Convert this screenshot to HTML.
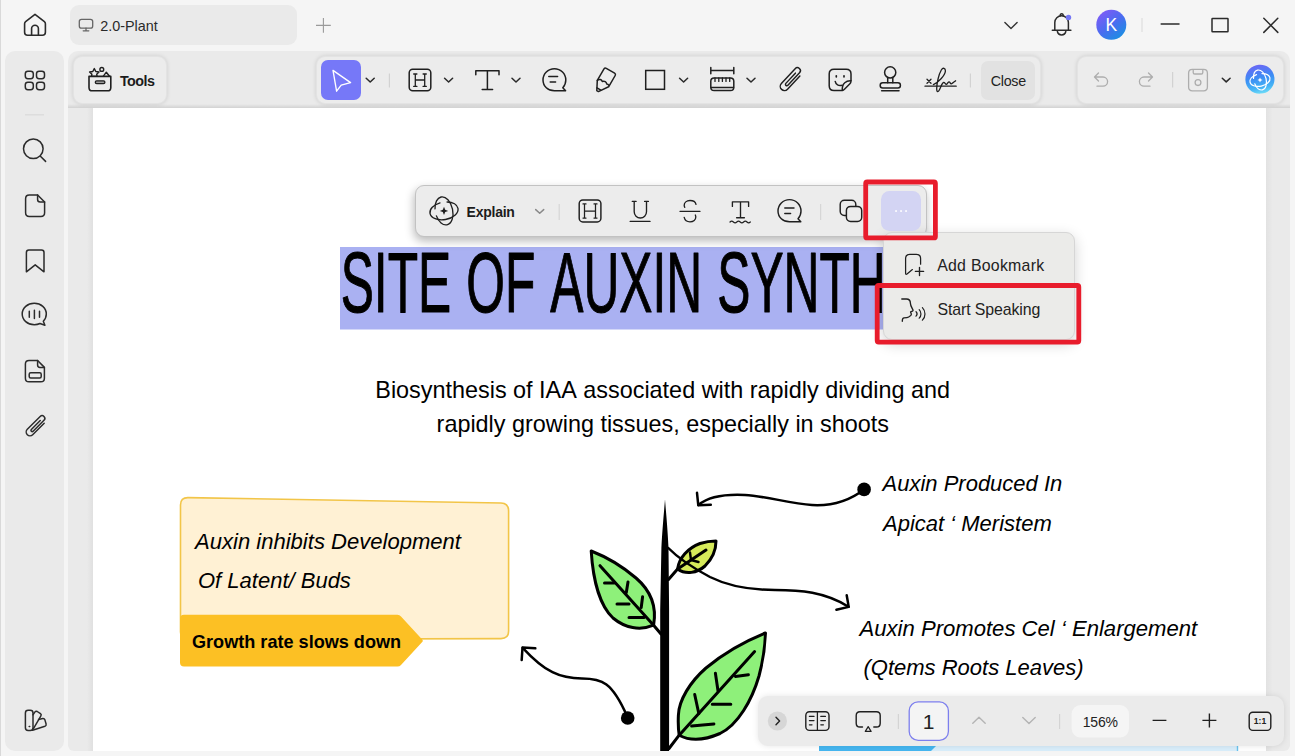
<!DOCTYPE html>
<html lang="en">
<head>
<meta charset="utf-8">
<title>2.0-Plant</title>
<style>
*{box-sizing:border-box;margin:0;padding:0}
html,body{width:1295px;height:756px;overflow:hidden;background:#f5f5f5;font-family:"Liberation Sans",sans-serif;color:#1a1a1a}
.abs{position:absolute}
#app{position:relative;width:1295px;height:756px;overflow:hidden;background:#f5f5f5}
svg{position:absolute;overflow:visible}
.ic{fill:none;stroke-linecap:round;stroke-linejoin:round}
#tab{left:70px;top:4.800px;width:227px;height:39.800px;background:#eaeaea;border-radius:9px}
#tabtxt{left:100px;top:16px;font-size:14.5px;line-height:18px;color:#2a2a2a;letter-spacing:-0.2px}
#side{left:5.200px;top:50.500px;width:59.200px;height:700px;background:#eaeaea;border-radius:10px}
#main{left:68px;top:51px;width:1222px;height:699.500px;background:#eaeaea;border-radius:10px 10px 6px 6px;overflow:hidden}
#page{left:25px;top:57px;width:1173px;height:643px;background:#fff}
.panel{background:#ececec;border:1px solid #e3e3e3;border-radius:9px;box-shadow:0 0 4px rgba(0,0,0,.13)}
#tools{left:72.600px;top:55.800px;width:94.400px;height:48.600px}
#tb{left:316px;top:56px;width:725px;height:48px}
#rp{left:1077px;top:56px;width:207px;height:48px}
#sel{left:321px;top:60px;width:40px;height:40px;background:#7678f8;border-radius:7px}
#closeb{left:981px;top:61px;width:54px;height:39px;background:#e2e2e2;border-radius:7px;font-size:14.5px;line-height:39px;text-align:center;color:#2a2a2a}
.sep{width:1px;background:#d4d4d4}
#ftb{left:415px;top:185px;width:512px;height:52px;background:#ececec;border:1px solid #c2c2c2;border-radius:9px;box-shadow:-1px 4px 10px rgba(0,0,0,.28)}
#more{left:881.400px;top:191.200px;width:40px;height:40px;background:#d3d4f3;border-radius:8.500px}
#menu{left:882.800px;top:231.500px;width:192px;height:108.700px;background:#ebebe9;border:1px solid #d6d6d6;border-radius:9px;box-shadow:0 4px 14px rgba(0,0,0,.18)}
.red{border:4.8px solid #e81c2c;border-radius:3px}
#hl{left:340px;top:247px;width:544px;height:82px;background:#a9adf4}
#bb{left:758px;top:696px;width:526px;height:50px;background:#ebebeb;border-radius:10px;box-shadow:0 0 6px rgba(0,0,0,.10)}
.it{font-style:italic;font-size:22px;line-height:26px;color:#111;white-space:nowrap}
</style>
</head>
<body>
<div id="app">
<!-- title bar -->
<div class="abs" style="left:0;top:0;width:1px;height:756px;background:#d9d9d9"></div>
<div id="tab" class="abs"></div>
<div id="side" class="abs"></div>
<div id="main" class="abs">
  <div class="abs" style="left:0;top:52.500px;width:1222px;height:4.500px;background:linear-gradient(180deg,rgba(0,0,0,0),rgba(0,0,0,.10))"></div>
  <div class="abs" style="left:19px;top:57px;width:6px;height:643px;background:linear-gradient(90deg,rgba(0,0,0,0),rgba(0,0,0,.045))"></div>
  <div id="page" class="abs"></div>
  <div class="abs" style="left:1198px;top:57px;width:6px;height:643px;background:linear-gradient(90deg,#e2e2e2,#e9e9e9)"></div>
</div>
<div id="tools" class="abs panel"></div>
<div id="tb" class="abs panel"></div>
<div id="rp" class="abs panel"></div>
<div id="sel" class="abs"></div>
<div id="closeb" class="abs"></div>
<!-- PAGE CONTENT -->
<svg id="pg" width="1295" height="756" viewBox="0 0 1295 756" style="left:0;top:0">
<defs><clipPath id="pc"><rect x="93" y="108" width="1173" height="643"/></clipPath></defs>
<g clip-path="url(#pc)" font-family="Liberation Sans, sans-serif" style="font-kerning:none">
<rect x="340" y="247" width="660" height="82.5" fill="#aab1f2"/>
<text style="font-kerning:none" word-spacing="2.100" transform="translate(340.700 311.900) scale(0.5835 1)" font-size="85.200" fill="#000" stroke="#000" stroke-width="0.900" stroke-linejoin="round" vector-effect="non-scaling-stroke">SITE OF AUXIN SYNTH</text>
<text x="375.3" y="398.4" font-size="23.4" fill="#000">Biosynthesis of IAA associated with rapidly dividing and</text>
<text x="436.6" y="432.3" font-size="23.4" fill="#000">rapidly growing tissues, especially in shoots</text>
<!-- yellow note -->
<path d="M180.5 505 Q180.5 497.5 188 497.6 L501 503 Q508.6 503.2 508.6 511 L508.6 631 Q508.6 638.6 501 638.6 L188 639.5 Q180.5 639.5 180.5 632 Z" fill="#fff1d4" stroke="#f2c548" stroke-width="1.600"/>
<path d="M184 614.800 L397.500 614.800 Q399.600 614.800 401 616.400 L422.200 639.400 Q423.400 640.700 422.200 642 L401 665 Q399.600 666.500 397.500 666.500 L184 666.500 Q180 666.500 180 662.500 L180 618.800 Q180 614.800 184 614.800 Z" fill="#fcc024"/>
<text x="195" y="549" font-size="22.050" font-style="italic" fill="#000">Auxin inhibits Development</text>
<text x="198" y="588.4" font-size="22" font-style="italic" fill="#000">Of Latent/ Buds</text>
<text x="192" y="648.3" font-size="18.1" font-weight="bold" fill="#000">Growth rate slows down</text>
<text x="882.5" y="491.3" font-size="22" font-style="italic" fill="#000">Auxin Produced In</text>
<text x="883" y="530.6" font-size="22" font-style="italic" fill="#000">Apicat ‘ Meristem</text>
<text x="859.5" y="635.9" font-size="22.1" font-style="italic" fill="#000">Auxin Promotes Cel ‘ Enlargement</text>
<text x="863.5" y="674.5" font-size="22" font-style="italic" fill="#000">(Qtems Roots Leaves)</text>
<!-- plant -->
<g fill="none" stroke="#000" stroke-width="3" stroke-linecap="round" stroke-linejoin="round">
<path d="M665 499.300 C664.200 510 662.400 528 661.400 548 L660.200 610 L660.200 751 L669.100 751 L669.100 610 L668.500 548 C667.600 528 665.800 510 665 499.300 Z" fill="#000" stroke="none"/>
<!-- left leaf -->
<path d="M591.2 551 C604 556 622 566 636 578 C650 590 657 606 653.6 625.2 C640 631 625 628 613 618 C600 606 593 580 591.2 551 Z" fill="#8ef07a"/>
<path d="M600 565.7 L653.6 625.2 L661 634"/>
<path d="M604.5 583 L614 583 M617 604 L629 604 M629 617.5 L644 617.5 M628 582 L626.3 592.5 M642.6 596.7 L641.2 607.6"/>
<!-- small leaf -->
<path d="M677.6 569 C679 558 688 548 700 543.5 C706 541.6 712 541 716 541 C716 548 713 558 705 566 C697 573 686 575 677.6 569 Z" fill="#d6ea5a"/>
<path d="M668.5 579.5 L677.6 569 L706 550"/>
<path d="M691 560 L690 552.5 M691 560 L698.5 562" stroke-width="2.4"/>
<!-- big leaf -->
<path d="M765.5 633 C748 640 724 653 706 668 C690 682 679 700 678.4 715 C678 723 678.4 730 679.2 735.2 C690 741 705 740 720 733.5 C738 725 752 700 759 676 C763 661 765 647 765.5 633 Z" fill="#8ef07a"/>
<path d="M754.6 651.6 L679.2 735.2 L669 748.5"/>
<path d="M735.4 676.4 L748.4 674.7 M712.3 704.3 L730.8 704.3 M691.6 726 L713.9 723.9 M715.4 673.3 L718 690.8 M694.7 694.5 L698.8 713.5"/>
</g>
<g fill="none" stroke="#000" stroke-width="2.5" stroke-linecap="round" stroke-linejoin="round">
<path d="M864 489.5 C848 502 830 506 812 505 C790 503.500 765 496 745 495 C725 494 708 497 698.500 505"/>
<path d="M697 492.800 L698.300 505.300 L710.800 504.700"/>
<path d="M668.300 548 C680 560 695 569 710 577 C730 587 750 590 775 590 C800 590 825 592 848.500 606.800"/>
<path d="M846.700 595.300 L848.700 606.900 L836.400 609.800"/>
<path d="M627 716 C612 682 602 678.500 582 678.500 C560 678.500 545 672 522.700 647.800"/>
<path d="M535.300 648.300 L522.500 647.500 L521.700 660"/>
</g>
<circle cx="864.1" cy="489.4" r="6.8" fill="#000"/>
<circle cx="627.7" cy="718" r="6.8" fill="#000"/>
<rect x="819" y="746" width="419" height="5" fill="#d9eefb"/>
<path d="M819 746 L936 746 L931 751 L819 751 Z" fill="#45b6f0"/>
<rect x="1236.800" y="746" width="1.400" height="5" fill="#6cc4ee"/>
</g>
</svg>
<!-- floating toolbar -->
<div id="ftb" class="abs"></div>
<div id="menu" class="abs"></div>
<div id="more" class="abs"></div>
<div id="bb" class="abs"></div>
<svg id="ui1" width="1295" height="756" viewBox="0 0 1295 756" style="left:0;top:0" font-family="Liberation Sans, sans-serif">
<!-- TITLEBAR -->
<text x="100.200" y="30.600" font-size="14.400" fill="#2a2a2a">2.0-Plant</text>
<g class="ic" stroke="#2b2b2b" stroke-width="1.6">
<path d="M35 14.300 L25.600 21.600 Q24.600 22.400 24.600 23.700 L24.600 32.300 Q24.600 35.300 27.600 35.300 L42.400 35.300 Q45.400 35.300 45.400 32.300 L45.400 23.700 Q45.400 22.400 44.400 21.600 Z"/>
<path d="M31.600 35.300 V28.600 a3.400 3.400 0 0 1 6.800 0 V35.300"/>
</g>
<g class="ic" stroke="#666" stroke-width="1.3">
<rect x="79.300" y="19.300" width="13.400" height="8.800" rx="2.200"/>
<path d="M86 28.100 V30.600 M83.200 30.800 H88.800"/>
</g>
<path d="M316 25.400 H330.800 M323.400 18 V32.800" stroke="#9a9a9a" stroke-width="1.100" fill="none"/>
<path class="ic" d="M1004.900 22.600 L1011 28.600 L1017.100 22.600" stroke="#333" stroke-width="1.400"/>
<g class="ic" stroke="#2b2b2b" stroke-width="1.500">
<path d="M1054.800 30.200 V22.600 a6.800 6.800 0 0 1 13.600 0 V30.200"/>
<path d="M1052.300 30.300 H1070.900"/>
<path d="M1057.400 31.500 a4.300 4.300 0 0 0 8.400 0"/>
<path d="M1060.200 15.700 a1.500 1.900 0 0 1 3 0"/>
</g>
<circle cx="1068.500" cy="17.500" r="2.700" fill="#7577f5"/>
<defs>
<linearGradient id="av" x1="0.150" y1="0.100" x2="0.800" y2="0.950"><stop offset="0" stop-color="#7c5cf6"/><stop offset="0.500" stop-color="#4a6cf0"/><stop offset="1" stop-color="#1b8fe2"/></linearGradient>
</defs>
<circle cx="1111.300" cy="24.800" r="15" fill="url(#av)"/>
<text x="1111.300" y="31" font-size="17.500" fill="#fff" text-anchor="middle">K</text>
<path d="M1142 18 V32" stroke="#dedede" stroke-width="1.200"/>
<g class="ic" stroke="#2b2b2b" stroke-width="1.500" stroke-linecap="butt">
<path d="M1161.200 24.100 H1179"/>
<rect x="1212" y="18.500" width="16" height="13.300" rx="0.500"/>
<path d="M1263.800 18.300 L1277.800 32.400 M1277.800 18.300 L1263.800 32.400"/>
</g>
<!-- SIDEBAR -->
<g class="ic" stroke="#2b2b2b" stroke-width="1.500">
<rect x="25.300" y="71.200" width="8" height="7.500" rx="2.600"/>
<rect x="36.500" y="71.200" width="8" height="7.500" rx="2.600"/>
<rect x="25.300" y="82.200" width="8" height="7.500" rx="2.600"/>
<rect x="36.500" y="82.200" width="8" height="7.500" rx="2.600"/>
<circle cx="33.300" cy="148.800" r="9.800"/>
<path d="M40.400 156.200 L45.600 161.400"/>
<path d="M37.600 195 H29.300 Q25.600 195 25.600 198.700 V212.800 Q25.600 216.500 29.300 216.500 H40.900 Q44.600 216.500 44.600 212.800 V202 Z"/>
<path d="M37.600 195 V199.500 Q37.600 202 40.100 202 H44.600"/>
<path d="M26.400 252.500 Q26.400 250 28.900 250 H41.500 Q44 250 44 252.500 V271.800 L35.200 264.800 L26.400 271.800 Z"/>
<path d="M34.300 303.300 C41 303.300 46.300 308 46.300 314 C46.300 316.800 45.200 319.300 43.300 321.200 L44.900 325.200 L40 323.500 C38.300 324.300 36.400 324.700 34.300 324.700 C27.500 324.700 22.200 320 22.200 314 C22.200 308 27.500 303.300 34.300 303.300 Z"/>
<path d="M29.300 311.200 V317.200 M34.400 310.300 V318.400 M39.500 311.200 V317.200"/>
<path d="M37.600 360.500 H29 Q25.400 360.500 25.400 364.100 V378.200 Q25.400 381.800 29 381.800 H40.800 Q44.400 381.800 44.400 378.200 V367.400 Z"/>
<path d="M37.600 360.500 V365 Q37.600 367.400 40 367.400 H44.400"/>
<rect x="29.200" y="372.700" width="12" height="5.200" rx="1.500"/>
<path transform="translate(36.100 425.900) rotate(-45) scale(0.900)" stroke-width="1.650" d="M8.500 4.200 L-9.600 4.200 A4.200 4.200 0 0 1 -9.600 -4.200 L10.600 -4.200 A3 3 0 0 1 10.600 1.800 L-6.500 1.800 A1.400 1.400 0 0 1 -6.500 -1 L7.500 -1"/>
<rect x="25.400" y="710.300" width="7.600" height="20.200" rx="2.700"/>
<path d="M33 714.800 L35 711.900 Q35.900 710.700 37.200 711.500 L40.500 713.700 Q41.700 714.600 40.900 715.900 L33.300 728.800"/>
<path d="M38.600 719.600 L42.800 718.600 Q44.300 718.400 44.900 719.900 L46.100 724 Q46.500 725.700 44.900 726.300 L32.600 730.300"/>
<circle cx="29.300" cy="726.500" r="0.500" fill="#2b2b2b" stroke-width="0.800"/>
</g>
<path d="M25 114.800 H44" stroke="#dadada" stroke-width="1.200"/>
</svg>
<svg id="ui2" width="1295" height="756" viewBox="0 0 1295 756" style="left:0;top:0" font-family="Liberation Sans, sans-serif">
<!-- TOOLS BUTTON -->
<g class="ic" stroke="#1f1f1f" stroke-width="1.600">
<path d="M89 76.400 H110.800 V87.400 Q110.800 90.800 107.400 90.800 H92.400 Q89 90.800 89 87.400 Z"/>
<rect x="95.300" y="80.800" width="9.600" height="2.800" rx="1.400" fill="#9a9a9a" stroke-width="1.300"/>
<path d="M94.300 68.600 L95.800 71.500 L99 72 L96.700 74.200 L97.100 76.400 H91.500 L91.900 74.200 L89.600 72 L92.800 71.500 Z" stroke-width="1.400"/>
<circle cx="101.800" cy="69.400" r="1.900" stroke-width="1.400"/>
<path d="M103.200 76.300 L106.300 72.200 L109.500 76.300" stroke-width="1.400"/>
</g>
<text x="120" y="85.700" font-size="14.300" font-weight="bold" fill="#1c1c1c" letter-spacing="-0.550">Tools</text>
<!-- MAIN TOOLBAR -->
<path class="ic" d="M333 70.400 L350.600 82.600 L341.200 85.200 L336.600 91.200 Z" stroke="#fff" stroke-width="1.350"/>
<g class="ic" stroke="#2b2b2b" stroke-width="1.550">
<path d="M366.200 78.300 L370.200 82 L374.200 78.300"/>
<path d="M444.600 78.300 L448.600 82 L452.600 78.300"/>
<path d="M512 78.300 L516 82 L520 78.300"/>
<path d="M679.600 78.300 L683.600 82 L687.600 78.300"/>
<path d="M747 78.300 L751 82 L755 78.300"/>
<path d="M1222.300 78.200 L1226.200 81.900 L1230.100 78.200"/>
</g>
<path d="M389.400 73.500 V87.500 M970.400 73.500 V87.500 M1172.600 72 V87.500" stroke="#d2d2d2" stroke-width="1.200" fill="none"/>
<g class="ic" stroke="#1f1f1f" stroke-width="1.500">
<!-- H box -->
<rect x="409.200" y="69.200" width="21.600" height="21.600" rx="3.500"/>
<path d="M415.300 74 V86.400 M424.700 74 V86.400 M415.300 80 H424.700 M413.700 74 H416.900 M423.100 74 H426.300 M413.700 86.400 H416.900 M423.100 86.400 H426.300" stroke-width="1.300"/>
<!-- T -->
<path d="M475.800 74.800 V70.800 H499 V74.800 M487.400 70.800 V89.400 M482.200 89.400 H492.600"/>
<!-- comment -->
<path d="M554.400 68.700 C560.800 68.700 565.800 73.700 565.800 80 C565.800 83 564.700 85.700 562.800 87.700 L565.600 90.800 H554.400 C548 90.800 543 86.200 543 80 C543 73.700 548 68.700 554.400 68.700 Z"/>
<path d="M548.800 76.600 H557.600 M550.200 82 H555.600"/>
<!-- highlighter -->
<path d="M606.300 68.400 L614.600 73.200 Q616 74.100 615.200 75.500 L608.600 86.800 L598.400 91.600 L596.800 90.700 L597.300 80.300 L604 68.900 Q604.900 67.600 606.300 68.400 Z"/>
<path d="M597.300 80.300 C599.500 78.800 601.500 79.500 602.300 81.500 C604.500 80.600 606.500 81.800 606.700 84 C607.600 84 608.400 84.500 608.900 85.400"/>
<path d="M597 87.800 L600.800 90.200"/>
<!-- rect -->
<rect x="645.700" y="70.500" width="18.800" height="18.800" stroke-linejoin="miter"/>
<!-- measure -->
<path d="M710.800 67.400 V73.800 M733.800 67.400 V73.800 M710.800 70.600 H733.800"/>
<rect x="710.800" y="78" width="23" height="12.600" rx="3.300"/>
<path d="M715 78 V81.400 M718.800 78 V81.400 M722.400 78 V81.400 M726 78 V81.400 M729.700 78 V81.400 M711 87.500 H733.600" stroke-width="1.300"/>
<!-- paperclip -->
<path transform="translate(791 79.300) rotate(-47)" stroke-width="1.450" d="M8.500 4.200 L-9.600 4.200 A4.200 4.200 0 0 1 -9.600 -4.200 L10.600 -4.200 A3 3 0 0 1 10.600 1.800 L-6.500 1.800 A1.400 1.400 0 0 1 -6.500 -1 L7.500 -1"/>
<!-- sticker -->
<path d="M851 80.500 V74 Q851 69.200 846.200 69.200 H834 Q829.200 69.200 829.200 74 V85.800 Q829.200 90.600 834 90.600 H841.500 C842.500 90.600 843.500 90.200 844.200 89.500 L849.900 83.800 C850.600 83.100 851 82 851 80.500 Z"/>
<path d="M851 80.800 C846.500 80.500 841.800 83 842.300 90.400"/>
<path d="M836.300 75.800 V76.800 M844 75.800 V76.800" stroke-width="1.700"/>
<path d="M835.200 81.400 C835.800 84.600 838.600 86.200 842.200 85.200"/>
<!-- stamp -->
<circle cx="890.200" cy="72.400" r="5.600"/>
<path d="M887.700 77.600 V82.800 M892.800 77.600 V82.800"/>
<rect x="880.200" y="82.800" width="20.200" height="5.200" rx="2.500"/>
<path d="M881.600 90.700 H899"/>
<!-- signature -->
<path d="M927 79.200 L931 83.200 M931 79.200 L927 83.200" stroke-width="1.300"/>
<path d="M925 86.200 H956.200" stroke-width="1.300"/>
<path d="M933.400 84.600 C938 82.500 945.200 75.500 945.400 71 C945.500 68 943 67.200 941.300 70 C938.800 74.200 936.800 83 936.700 88.500 C936.700 92.500 938.300 92.400 939.600 89.500 C940.800 86.800 941.800 83.600 943.300 82.600 C944.800 81.700 945.200 84.600 946.400 84.300 C947.700 84 948 81.600 949.200 81.800 C950.300 82 950.100 84 951.300 83.800 C952.600 83.500 953.800 81.600 955.600 80.800" stroke-width="1.300"/>
</g>
<text x="1008.300" y="85.600" font-size="14.300" fill="#222" text-anchor="middle" letter-spacing="-0.300">Close</text>
<!-- RIGHT PANEL -->
<g class="ic" stroke="#adadad" stroke-width="1.300">
<path d="M1098.500 73 L1094.500 77 L1098.500 81 M1094.800 77 H1103 a4.600 4.600 0 0 1 0 9.200 H1097"/>
<path d="M1148.500 73 L1152.500 77 L1148.500 81 M1152.200 77 H1144 a4.600 4.600 0 0 0 0 9.200 H1150"/>
<path d="M1192.400 69.400 H1203.600 Q1207.400 69.400 1207.400 73.200 V87 Q1207.400 90.800 1203.600 90.800 H1192.400 Q1188.600 90.800 1188.600 87 V73.200 Q1188.600 69.400 1192.400 69.400 Z"/>
<path d="M1193.200 69.600 V72.400 Q1193.200 74 1194.800 74 H1201.200 Q1202.800 74 1202.800 72.400 V69.600"/>
<circle cx="1198" cy="82.600" r="2.900"/>
</g>
<defs>
<linearGradient id="aig" x1="0.350" y1="0" x2="0.550" y2="1"><stop offset="0" stop-color="#6c66f5"/><stop offset="0.450" stop-color="#3c8cf4"/><stop offset="0.800" stop-color="#45b4f5"/><stop offset="1" stop-color="#6fdcf8"/></linearGradient>
<filter id="soft" x="-20%" y="-20%" width="140%" height="140%"><feGaussianBlur stdDeviation="0.500"/></filter>
</defs>
<path d="M1259 64.800 C1266 64 1273.500 69 1274.400 77.500 C1275.200 86 1269.500 93 1261 93.600 C1252.500 94.200 1245.800 88.500 1245.400 80 C1245 72 1251 65.500 1259 64.800 Z" fill="url(#aig)" filter="url(#soft)"/>
<g class="ic" stroke="#fff" stroke-width="1.200" transform="translate(1260 80)">
<ellipse rx="10.200" ry="6.200" transform="rotate(76)" stroke-dasharray="47 5.500" stroke-dashoffset="-16"/>
<ellipse rx="10.200" ry="6.200" transform="rotate(-12)" stroke-dasharray="47 5.500" stroke-dashoffset="-42"/>
<path d="M0 -2.600 L0.800 -0.800 L2.600 0 L0.800 0.800 L0 2.600 L-0.800 0.800 L-2.600 0 L-0.800 -0.800 Z" fill="#fff" stroke="none"/>
</g>
</svg>
<svg id="ui3" width="1295" height="756" viewBox="0 0 1295 756" style="left:0;top:0" font-family="Liberation Sans, sans-serif">
<rect x="865.700" y="182" width="69.700" height="55.900" rx="1.500" fill="none" stroke="#e81c2c" stroke-width="4.800" stroke-linejoin="round"/>
<rect x="877.200" y="285.500" width="201.600" height="56.600" rx="1.500" fill="none" stroke="#e81c2c" stroke-width="4.800" stroke-linejoin="round"/>
<!-- FLOATING TOOLBAR -->
<g class="ic" stroke="#1f1f1f" stroke-width="1.350" transform="translate(444 210.900)">
<ellipse rx="14.200" ry="8.700" transform="rotate(78)" stroke-dasharray="66 7.200" stroke-dashoffset="-22"/>
<ellipse rx="14.200" ry="8.700" transform="rotate(-10)" stroke-dasharray="66 7.200" stroke-dashoffset="-59"/>
<path d="M0 -4.200 L1.200 -1.200 L4.200 0 L1.200 1.200 L0 4.200 L-1.200 1.200 L-4.200 0 L-1.200 -1.200 Z" fill="#1f1f1f" stroke="none"/>
</g>
<text x="466.600" y="217.400" font-size="14" font-weight="bold" fill="#1c1c1c" letter-spacing="-0.250">Explain</text>
<path class="ic" d="M535.700 209.600 L539.700 213.300 L543.700 209.600" stroke="#8a8a8a" stroke-width="1.500"/>
<path d="M559.200 204 V220 M820.600 204 V220" stroke="#d6d6d6" stroke-width="1.200" fill="none"/>
<g class="ic" stroke="#1f1f1f" stroke-width="1.450">
<rect x="579.200" y="200" width="21.700" height="21.900" rx="3.600"/>
<path d="M584.500 203.900 V218.100 M595.500 203.900 V218.100 M584.500 211 H595.500 M583 203.900 H586 M594 203.900 H597 M583 218.100 H586 M594 218.100 H597" stroke-width="1.250"/>
<!-- U -->
<path d="M634.200 201.400 V211.800 a6.150 6.200 0 0 0 12.300 0 V201.400 M632.300 201.400 H636.100 M644.600 201.400 H648.400" stroke-width="1.350"/>
<path d="M630.200 221.400 H650" stroke-width="1.350"/>
<!-- strike -->
<path d="M680 211.300 H700 M696 204.300 C695.500 202 693 200.500 690 200.500 C686.500 200.500 684.200 202.700 684.200 205.200 C684.200 206 684.400 206.700 684.800 207.300 M684.200 217.400 C684.800 220 687 221.800 690 221.800 C693.500 221.800 695.800 219.600 695.800 217 C695.800 216.300 695.600 215.600 695.300 215" stroke-width="1.350"/>
<!-- T wavy -->
<path d="M732.400 206.400 V201.800 H748.600 V206.400 M740.500 201.800 V217.700 M736.600 217.700 H744.400" stroke-width="1.350"/>
<path d="M730 222 q1.700 -1.700 3.400 0 t3.400 0 t3.400 0 t3.400 0 t3.400 0 t3.300 0" stroke-width="1.200"/>
<!-- comment -->
<path d="M789.500 199.600 C796 199.600 801 204.700 801 211 C801 214 799.900 216.700 798 218.700 L800.800 221.800 H789.500 C783 221.800 778 217.200 778 211 C778 204.700 783 199.600 789.500 199.600 Z"/>
<path d="M784.800 207.900 H794 M784.800 213.400 H790.600"/>
<!-- copy -->
<rect x="840.200" y="200.200" width="15.600" height="15.200" rx="4.200"/>
<rect x="846.400" y="206.400" width="15.300" height="15" rx="4.200" fill="#ececec"/>
</g>
<rect x="895.200" y="210.200" width="1.700" height="1.700" fill="#fff"/><rect x="900.200" y="210.200" width="1.700" height="1.700" fill="#fff"/><rect x="905.200" y="210.200" width="1.700" height="1.700" fill="#fff"/>
<!-- MENU -->
<g class="ic" stroke="#1f1f1f" stroke-width="1.350">
<path stroke-width="1.250" d="M920.600 264.200 V258.600 Q920.600 254.400 916.400 254.400 H909.800 Q905.600 254.400 905.600 258.600 V273.200 Q905.600 275 907 274 L912.400 269.600"/>
<path d="M915.400 271.400 H923.600 M919.500 267.300 V275.500"/>
<path d="M901.800 299 H906.400 C908.800 299 910.400 300.800 910.400 303.300 C910.400 305.800 912 308 913 310 C913.300 310.800 912.600 311.300 910.600 311.800 C910.600 312.800 911.300 313.400 911.300 314.400 C911.300 315.400 909.800 316.200 908.700 317 C907.500 317.800 905.500 317.900 904 317.900 C902.800 317.900 902.300 319 902.300 321.300"/>
<path d="M916 311.600 a3.300 3.300 0 0 1 0 4.600 M919.200 309.600 a6.200 6.200 0 0 1 0 8.600 M922.400 307.600 a9 9 0 0 1 0 12.600" stroke-width="1.200"/>
</g>
<text x="937.200" y="270.600" font-size="15.900" fill="#222" letter-spacing="0.250">Add Bookmark</text>
<text x="937.400" y="315.400" font-size="15.900" fill="#222" letter-spacing="-0.100">Start Speaking</text>
<!-- BOTTOM BAR -->
<circle cx="777.400" cy="721" r="9.600" fill="#d6d6d6"/>
<path class="ic" d="M776 717.200 L779.600 721 L776 724.800" stroke="#222" stroke-width="1.400"/>
<g class="ic" stroke="#1f1f1f" stroke-width="1.400">
<rect x="805.800" y="711.800" width="23.200" height="18.600" rx="3.600"/>
<path d="M817.400 711.800 V730.400 M809.400 716.400 H814 M809.400 720.600 H814 M809.400 724.800 H812 M820.800 716.400 H825.400 M820.800 720.600 H825.400 M820.800 724.800 H823.400" stroke-width="1.250"/>
<path d="M862.500 727 H860 Q856.200 727 856.200 723.200 V715.600 Q856.200 711.800 860 711.800 H876.400 Q880.200 711.800 880.200 715.600 V723.200 Q880.200 727 876.400 727 H873.800"/>
<path d="M868.200 726.600 L865.300 731.400 H871.100 Z" stroke-width="1.200"/>
<path d="M1152.600 720.400 H1166.400 M1202.400 720.400 H1216.400 M1209.400 713.400 V727.400" stroke-linecap="butt"/>
<rect x="1249.200" y="712.200" width="21.600" height="18.200" rx="3.600"/>
</g>
<path d="M898.400 714 V729 M1059.600 714 V729" stroke="#d4d4d4" stroke-width="1.200" fill="none"/>
<rect x="909.200" y="701.800" width="39.200" height="38.600" rx="9" fill="#f4f4f4" stroke="#7d7fee" stroke-width="1.300"/>
<text x="928.600" y="729" font-size="21" fill="#222" text-anchor="middle">1</text>
<path class="ic" d="M972.800 723.200 L979 717.200 L985.200 723.200 M1022.800 717.600 L1029 723.600 L1035.200 717.600" stroke="#b4b4b4" stroke-width="1.400"/>
<rect x="1071.600" y="705" width="57.400" height="32.600" rx="9" fill="#f5f5f5"/>
<text x="1100.300" y="727.200" font-size="14" fill="#222" text-anchor="middle" letter-spacing="-0.200">156%</text>
<text x="1260" y="724.400" font-size="8.600" font-weight="bold" fill="#222" text-anchor="middle">1:1</text>
</svg>
</div>
</body>
</html>
